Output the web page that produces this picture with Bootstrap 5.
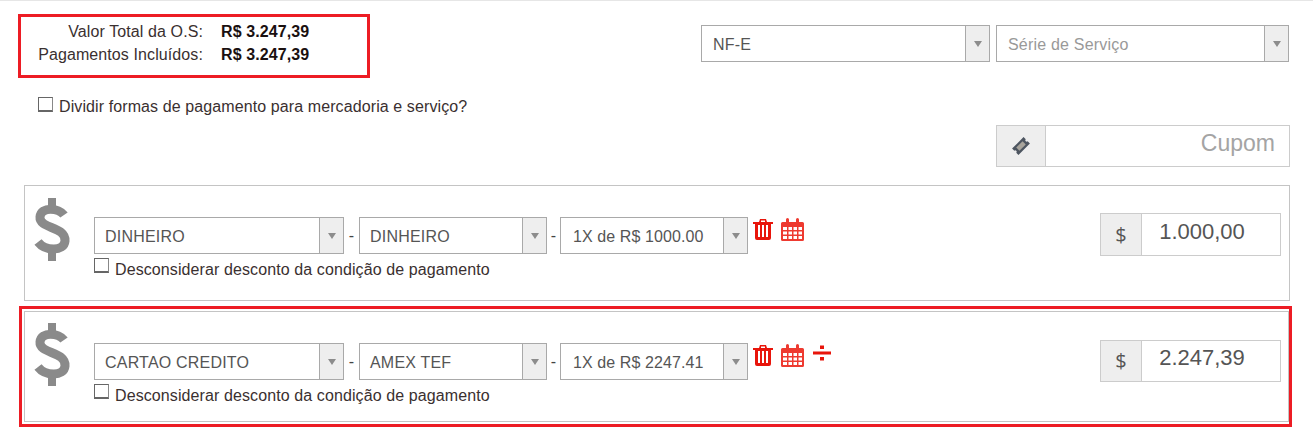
<!DOCTYPE html>
<html lang="pt-BR">
<head>
    <meta charset="UTF-8">
    <meta name="viewport" content="width=device-width, initial-scale=1.0">
    <title>Pagamentos da O.S.</title>
    <link href="https://cdn.jsdelivr.net/npm/bootstrap@5.3.0/dist/css/bootstrap.min.css" rel="stylesheet">
    <style>
        body {
            background-color: #fff;
            color: #3a3030;
            font-family: "Liberation Sans", Arial, sans-serif;
            font-size: 16px;
            letter-spacing: .1px;
            border-top: 1px solid #e6e6e6;
            height: 431px;
            overflow: hidden;
        }
        .top-area { padding: 13px 24px 0 18px; height: 124px; }
        .totals-box {
            width: 352px;
            height: 64px;
            border: 3px solid #ed1c24;
            padding: 3px 0 0 0;
            line-height: 23px;
        }
        .totals-label { width: 182px; text-align: right; }
        .totals-value { margin-left: 18px; font-weight: 700; color: #1a1010; }
        .split-check { margin: 18px 0 0 20px; gap: 6px; line-height: 22px; }
        .split-check .check-box { margin-bottom: 5px; }
        .check-box {
            display: inline-block;
            width: 15px;
            height: 15px;
            border: 1px solid #666;
            border-bottom-width: 2px;
            border-right-color: #888;
            flex-shrink: 0;
        }
        .combo {
            display: flex;
            height: 37px;
            border: 1px solid #a9a9a9;
            background: #fff;
            color: #555;
            letter-spacing: .2px;
        }
        .combo-text { flex: 1; padding: 0 10px; line-height: 37px; white-space: nowrap; }
        .w-nf .combo-text, .w-serie .combo-text { padding: 0 11px; }
        .w-parc .combo-text { padding: 0 12px; letter-spacing: .1px; }
        .combo-arrow {
            width: 24px;
            background: #eee;
            border-left: 1px solid #a9a9a9;
            display: flex;
            align-items: center;
            justify-content: center;
        }
        .combo-arrow::after {
            content: "";
            border-left: 4px solid transparent;
            border-right: 4px solid transparent;
            border-top: 6px solid #8c8c8c;
        }
        .muted-text { color: #999; }
        .w-nf { width: 289px; }
        .w-serie { width: 293px; }
        .w-forma { width: 250px; }
        .w-band { width: 188px; }
        .w-parc { width: 188px; }
        .head-selects { margin-top: 11px; gap: 6px; }
        .coupon-row { padding-right: 23px; height: 42px; }
        .addon-group {
            display: flex;
            border: 1px solid #ccc;
            background: #fff;
        }
        .addon-cell {
            background: #eee;
            border-right: 1px solid #ccc;
            display: flex;
            align-items: center;
            justify-content: center;
            color: #555;
            font-family: "Open Sans", sans-serif;
            font-weight: 500;
            font-size: 20px;
        }
        .coupon-group { width: 294px; height: 42px; }
        .coupon-group .addon-cell { width: 49px; }
        .coupon-text { flex: 1; text-align: right; padding-right: 14px; font-size: 23px; color: #a4a4a4; line-height: 35px; letter-spacing: 0; }
        .value-group { width: 181px; height: 43px; margin-top: 27px; }
        .value-group .addon-cell { width: 41px; }
        .value-text { flex: 1; text-align: center; font-size: 22px; color: #555; line-height: 35px; letter-spacing: 0; padding-right: 18px; }
        .pay-card {
            margin-left: 24px;
            width: 1266px;
            height: 116px;
            border: 1px solid #c4c4c4;
            padding-left: 9px;
            padding-right: 8px;
        }
        .first-pay { margin-top: 18px; }
        .second-wrap {
            margin: 5px 0 0 19px;
            width: 1273px;
            height: 121px;
            border: 3px solid #ed1c24;
            padding: 2px 0 0 2px;
        }
        .second-wrap .pay-card { margin-left: 0; width: 1265px; height: 111px; padding-right: 7px; }
        .dollar-icon { width: 38px; margin-top: 11px; flex-shrink: 0; }
        .pay-main { margin-left: 22px; margin-top: 31px; }
        .second-wrap .dollar-icon { margin-top: 10px; }
        .second-wrap .value-group { margin-top: 28px; height: 42px; }
        .second-wrap .value-text { line-height: 34px; }
        .pay-dash { width: 15px; text-align: center; color: #444; line-height: 37px; }
        .pay-dash.dash-narrow { width: 13px; }
        .pay-icons { gap: 8px; padding: 1px 0 0 5px; align-items: flex-start; }
        .discount-check { margin-top: 3px; height: 20px; line-height: 25px; gap: 6px; }
        .discount-check .check-box { margin-top: 1px; }
    </style>
</head>
<body>

<!-- Totais e nota -->
<div class="top-area">
    <div class="d-flex justify-content-between">
        <div>
            <div class="totals-box">
                <div class="d-flex"><span class="totals-label">Valor Total da O.S:</span><span class="totals-value">R$ 3.247,39</span></div>
                <div class="d-flex"><span class="totals-label">Pagamentos Incluídos:</span><span class="totals-value">R$ 3.247,39</span></div>
            </div>
            <div class="split-check d-flex align-items-center">
                <span class="check-box"></span><span>Dividir formas de pagamento para mercadoria e serviço?</span>
            </div>
        </div>
        <div class="d-flex head-selects align-items-start">
            <div class="combo w-nf"><span class="combo-text">NF-E</span><span class="combo-arrow"></span></div>
            <div class="combo w-serie"><span class="combo-text muted-text">Série de Serviço</span><span class="combo-arrow"></span></div>
        </div>
    </div>
</div>

<!-- Cupom -->
<div class="coupon-row d-flex justify-content-end">
    <div class="addon-group coupon-group">
        <span class="addon-cell">
            <svg width="18" height="18" viewBox="0 0 20 20"><g transform="rotate(-45 10 10)"><path d="M1 5H19V8.500A1.500 1.500 0 0 0 19 11.500V15H1V11.500A1.500 1.500 0 0 0 1 8.500Z" fill="#4d5560"/><rect x="5" y="7.500" width="10" height="5" fill="#a8a49c"/></g></svg>
        </span>
        <span class="coupon-text">Cupom</span>
    </div>
</div>

<!-- Pagamento 1 -->
<div class="pay-card first-pay d-flex">
    <svg class="dollar-icon" height="66" viewBox="1 0 38 66"><path d="M31 18C26 11 8 9 7 20C6 32 33 29 32 44C31 55 12 54 5 45" fill="none" stroke="#8a8a8a" stroke-width="9"/><rect x="15" y="1" width="8" height="11" fill="#8a8a8a"/><rect x="15" y="52" width="8" height="12" fill="#8a8a8a"/></svg>
    <div class="pay-main">
        <div class="d-flex">
            <div class="combo w-forma"><span class="combo-text">DINHEIRO</span><span class="combo-arrow"></span></div>
            <span class="pay-dash">-</span>
            <div class="combo w-band"><span class="combo-text">DINHEIRO</span><span class="combo-arrow"></span></div>
            <span class="pay-dash dash-narrow">-</span>
            <div class="combo w-parc"><span class="combo-text">1X de R$ 1000.00</span><span class="combo-arrow"></span></div>
            <div class="pay-icons d-flex">
                <svg width="20" height="22" viewBox="0 0 20 22"><path d="M0 4H6L7 1H13L14 4H20V6H18V20Q18 22 16 22H4Q2 22 2 20V6H0Z" fill="#e8150b"/><path d="M8 2.5H12V4H8ZM5 7H7V19H5ZM9 7H11V19H9ZM13 7H15V19H13Z" fill="#fff"/></svg>
                <svg width="23" height="23" viewBox="0 0 23 23"><path d="M1.5 4H5V1.5Q5 0 6.500 0T8 1.500V4H15V1.500Q15 0 16.500 0T18 1.500V4H21.500Q23 4 23 5.500V21.500Q23 23 21.500 23H1.500Q0 23 0 21.500V5.500Q0 4 1.500 4Z" fill="#ee3a30"/><path d="M2 9H6V12H2ZM7.500 9H11V12H7.500ZM12.500 9H16V12H12.500ZM17.500 9H21V12H17.500ZM2 13.500H6V16.500H2ZM7.500 13.500H11V16.500H7.500ZM12.500 13.500H16V16.500H12.500ZM17.500 13.500H21V16.500H17.500ZM2 18H6V21H2ZM7.500 18H11V21H7.500ZM12.500 18H16V21H12.500ZM17.500 18H21V21H17.500Z" fill="#fff"/></svg>
            </div>
        </div>
        <div class="discount-check d-flex">
            <span class="check-box"></span><span>Desconsiderar desconto da condição de pagamento</span>
        </div>
    </div>
    <div class="ms-auto">
        <div class="addon-group value-group">
            <span class="addon-cell">$</span>
            <span class="value-text">1.000,00</span>
        </div>
    </div>
</div>

<!-- Pagamento 2 -->
<div class="second-wrap">
    <div class="pay-card d-flex">
        <svg class="dollar-icon" height="66" viewBox="1 0 38 66"><path d="M31 18C26 11 8 9 7 20C6 32 33 29 32 44C31 55 12 54 5 45" fill="none" stroke="#8a8a8a" stroke-width="9"/><rect x="15" y="1" width="8" height="11" fill="#8a8a8a"/><rect x="15" y="52" width="8" height="12" fill="#8a8a8a"/></svg>
        <div class="pay-main">
            <div class="d-flex">
                <div class="combo w-forma"><span class="combo-text">CARTAO CREDITO</span><span class="combo-arrow"></span></div>
                <span class="pay-dash">-</span>
                <div class="combo w-band"><span class="combo-text">AMEX TEF</span><span class="combo-arrow"></span></div>
                <span class="pay-dash dash-narrow">-</span>
                <div class="combo w-parc"><span class="combo-text">1X de R$ 2247.41</span><span class="combo-arrow"></span></div>
                <div class="pay-icons d-flex">
                    <svg width="20" height="22" viewBox="0 0 20 22"><path d="M0 4H6L7 1H13L14 4H20V6H18V20Q18 22 16 22H4Q2 22 2 20V6H0Z" fill="#e8150b"/><path d="M8 2.5H12V4H8ZM5 7H7V19H5ZM9 7H11V19H9ZM13 7H15V19H13Z" fill="#fff"/></svg>
                    <svg width="23" height="23" viewBox="0 0 23 23"><path d="M1.5 4H5V1.5Q5 0 6.500 0T8 1.500V4H15V1.500Q15 0 16.500 0T18 1.500V4H21.500Q23 4 23 5.500V21.500Q23 23 21.500 23H1.500Q0 23 0 21.500V5.500Q0 4 1.500 4Z" fill="#ee3a30"/><path d="M2 9H6V12H2ZM7.500 9H11V12H7.500ZM12.500 9H16V12H12.500ZM17.500 9H21V12H17.500ZM2 13.500H6V16.500H2ZM7.500 13.500H11V16.500H7.500ZM12.500 13.500H16V16.500H12.500ZM17.500 13.500H21V16.500H17.500ZM2 18H6V21H2ZM7.500 18H11V21H7.500ZM12.500 18H16V21H12.500ZM17.500 18H21V21H17.500Z" fill="#fff"/></svg>
                    <svg width="20" height="18" viewBox="0 0 20 18"><path d="M1 7.500H19V10.500H1ZM8 1.500H12V5H8ZM8 13H12V16.500H8Z" fill="#e8150b"/></svg>
                </div>
            </div>
            <div class="discount-check d-flex">
                <span class="check-box"></span><span>Desconsiderar desconto da condição de pagamento</span>
            </div>
        </div>
        <div class="ms-auto">
            <div class="addon-group value-group">
                <span class="addon-cell">$</span>
                <span class="value-text">2.247,39</span>
            </div>
        </div>
    </div>
</div>

<script src="https://cdn.jsdelivr.net/npm/bootstrap@5.3.0/dist/js/bootstrap.bundle.min.js"></script>
</body>
</html>
